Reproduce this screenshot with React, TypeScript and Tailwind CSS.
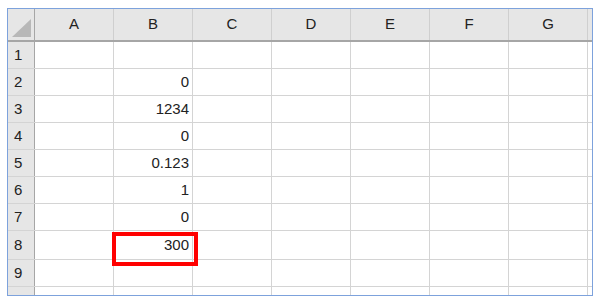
import React from "react";

const cols = ["A", "B", "C", "D", "E", "F", "G"];
const rowHeights = [27, 27, 27, 27, 27, 27, 27, 29, 27];
const bVals: Record<number, string> = { 2: "0", 3: "1234", 4: "0", 5: "0.123", 6: "1", 7: "0", 8: "300" };

export default function App() {
  return (
    <div className="w-[598px] h-[303px] bg-white relative" style={{ fontFamily: '"Liberation Sans", Arial, sans-serif' }}>
      <div className="absolute left-[7px] top-[8px] w-[586px] h-[288px] border border-[#7da2dc] overflow-hidden bg-white">
        <div className="flex flex-col">
          <div className="flex h-[33px] bg-[#e6e6e6] border-b-2 border-[#a6a6a6]">
            <div className="w-[27px] shrink-0 border-r border-[#a6a6a6] relative">
              <svg className="absolute left-[3px] top-[10px]" width="21" height="19" viewBox="0 0 21 19">
                <polygon points="1,18 20,18 20,0" fill="#b8b8b8" />
              </svg>
            </div>
            {cols.map((c) => (
              <div key={c} className="w-[79px] shrink-0 border-r border-[#cfcfcf] flex items-center justify-center text-[15px] text-[#222]">
                {c}
              </div>
            ))}
            <div className="w-[4px] shrink-0" />
          </div>
          {rowHeights.map((h, i) => (
            <div key={i} className="flex border-b border-[#d4d4d4]" style={{ height: h }}>
              <div className="w-[27px] shrink-0 bg-[#e6e6e6] border-r border-[#a6a6a6] flex items-center pl-[6px] text-[15px] text-[#222]">
                {i + 1}
              </div>
              {cols.map((c) => (
                <div key={c} className="w-[79px] shrink-0 border-r border-[#d4d4d4] flex items-center justify-end pr-[3px] text-[15px] text-[#222]">
                  {c === "B" ? bVals[i + 1] ?? "" : ""}
                </div>
              ))}
              <div className="w-[4px] shrink-0" />
            </div>
          ))}
          <div className="flex h-[10px]">
            <div className="w-[27px] shrink-0 bg-[#e6e6e6] border-r border-[#a6a6a6]" />
            {cols.map((c) => (
              <div key={c} className="w-[79px] shrink-0 border-r border-[#d4d4d4]" />
            ))}
          </div>
        </div>
      </div>
      <div className="absolute left-[112px] top-[232px] w-[86px] h-[34px] border-[4px] border-[#ff0000]" />
    </div>
  );
}
